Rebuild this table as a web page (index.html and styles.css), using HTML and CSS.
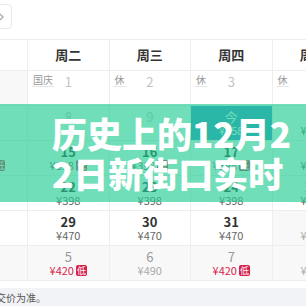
FILE: index.html
```html
<!DOCTYPE html>
<html lang="zh">
<head>
<meta charset="utf-8">
<link rel="stylesheet" href="styles.css">
</head>
<body>
<div class="toolbar">
  <div class="navbtn"><svg width="5" height="8" viewBox="0 0 5 8"><path d="M1 1 L4 4 L1 7" fill="none" stroke="#aaa" stroke-width="1.3"/></svg></div>
</div>
<div class="cal">
  <div class="week">
    <div class="wd">周一</div><div class="wd">周二</div><div class="wd">周三</div><div class="wd">周四</div><div class="wd">周五</div><div class="wd">周六</div><div class="wd">周日</div>
  </div>
  <div class="days">
    <div class="d other"><span class="num past">30</span></div>
    <div class="d"><span class="tag">国庆</span><span class="num past">1</span></div>
    <div class="d"><span class="tag rest">休</span><span class="num past">2</span></div>
    <div class="d"><span class="tag rest">休</span><span class="num past">3</span></div>
    <div class="d"><span class="tag rest">休</span><span class="num past">4</span></div>
    <div class="d"><span class="tag rest">休</span><span class="num past">5</span></div>
    <div class="d"><span class="tag rest">休</span><span class="num past">6</span></div>

    <div class="d"><span class="tag rest">休</span><span class="num past">7</span></div>
    <div class="d"><span class="num past">8</span></div>
    <div class="d"><span class="num past">9</span></div>
    <div class="d today"><span class="num">今</span><span class="price">¥558</span></div>
    <div class="d"><span class="num">11</span><span class="price">¥558</span></div>
    <div class="d"><span class="num">12</span><span class="price">¥558</span></div>
    <div class="d"><span class="num">13</span><span class="price">¥558</span></div>

    <div class="d"><span class="num">14</span><span class="price">¥398 <i class="low">低</i></span></div>
    <div class="d"><span class="num">15</span><span class="price">¥398 <i class="low">低</i></span></div>
    <div class="d"><span class="num">16</span><span class="price">¥398 <i class="low">低</i></span></div>
    <div class="d"><span class="num">17</span><span class="price">¥398 <i class="low">低</i></span></div>
    <div class="d"><span class="num">18</span><span class="price">¥398</span></div>
    <div class="d"><span class="num">19</span><span class="price">¥398</span></div>
    <div class="d"><span class="num">20</span><span class="price">¥398</span></div>

    <div class="d"><span class="num">21</span><span class="price">¥398</span></div>
    <div class="d"><span class="num">22</span><span class="price">¥398</span></div>
    <div class="d"><span class="num">23</span><span class="price">¥398</span></div>
    <div class="d"><span class="num">24</span><span class="price">¥398</span></div>
    <div class="d"><span class="num">25</span><span class="price">¥398</span></div>
    <div class="d"><span class="num">26</span><span class="price">¥398</span></div>
    <div class="d"><span class="num">27</span><span class="price">¥398</span></div>

    <div class="d"><span class="num">28</span><span class="price">¥470</span></div>
    <div class="d"><span class="num">29</span><span class="price">¥470</span></div>
    <div class="d"><span class="num">30</span><span class="price">¥470</span></div>
    <div class="d"><span class="num">31</span><span class="price">¥470</span></div>
    <div class="d other"><span class="num">1</span><span class="price">¥490</span></div>
    <div class="d other"><span class="num">2</span><span class="price">¥490</span></div>
    <div class="d other"><span class="num">3</span><span class="price">¥490</span></div>

    <div class="d other"><span class="num">4</span><span class="price">¥490</span></div>
    <div class="d other"><span class="num">5</span><span class="price red">¥420 <i class="low">低</i></span></div>
    <div class="d other"><span class="num">6</span><span class="price">¥490</span></div>
    <div class="d other"><span class="num">7</span><span class="price red">¥420 <i class="low">低</i></span></div>
    <div class="d other"><span class="num">8</span><span class="price">¥490</span></div>
    <div class="d other"><span class="num">9</span><span class="price">¥490</span></div>
    <div class="d other"><span class="num">10</span><span class="price">¥490</span></div>
  </div>
</div>
<div class="note">请以实际成交价为准。</div>
<div class="banner">
  <h1 class="title"><span class="line">历史上的12月2</span><span class="line">2日新街口实时</span></h1>
</div>
</body>
</html>
```

FILE: styles.css
```css
* { box-sizing: border-box; margin: 0; padding: 0; }
html, body { width: 306px; height: 306px; overflow: hidden; background: #fff; }
body {
  position: relative;
  font-family: "Noto Sans CJK SC", "Noto Sans", sans-serif;
  color: #333;
}
.toolbar { height: 39px; padding-top: 4px; }
.navbtn {
  width: 44px; height: 25px; margin-left: -32px;
  border: 1px solid #e8e8e8; border-radius: 4px;
  display: flex; align-items: center; justify-content: flex-end;
  padding-right: 7px;
}
.navbtn svg { display: block; }
.cal { margin-left: -53.5px; width: 570.5px; }
.week, .days {
  display: grid;
  grid-template-columns: repeat(7, 81.5px);
}
.week { border-top: 1px solid #eee; }
.wd {
  height: 31px; line-height: 30px; text-align: center;
  font-size: 13px; font-weight: 700; color: #333;
  border-right: 1px solid #eee; border-bottom: 1px solid #eee;
}
.days { grid-auto-rows: 35px; }
.d {
  position: relative;
  display: flex; flex-direction: column; align-items: center;
  padding-top: 3px;
  border-right: 1px solid #eee; border-bottom: 1px solid #eee;
}
.d.other { background: #f8f8f8; }
.num { font-size: 13px; line-height: 16px; font-weight: 700; color: #333; }
.num.past { font-weight: 400; color: #c4c4c4; }
.other .num { font-weight: 400; color: #999; }
.price {
  font-size: 11px; line-height: 11px; color: #666; white-space: nowrap;
  display: flex; align-items: center; gap: 2px;
}
.other .price { color: #aaa; }
.other .price.red, .price.red { color: #d6224b; }
.low {
  font-style: normal; font-size: 9px; line-height: 11px;
  width: 11px; height: 11px; text-align: center;
  background: #d6224b; color: #fff; border-radius: 2px;
}
.tag {
  position: absolute; top: 3px; left: 4px;
  font-size: 10px; line-height: 12px; color: #999;
  padding: 0 1px; border-bottom: 1px solid #e5e5e5;
}
.today { background: #3790d1; }
.today .num, .today .price { color: #fff; font-weight: 400; }
.note {
  margin-top: 7px; height: 19px; line-height: 19px;
  background: #f2f3f6; font-size: 10px; color: #555;
  white-space: nowrap; text-indent: -54px; overflow: hidden;
}
.banner {
  position: absolute; left: 0; top: 104px; width: 306px; height: 98px;
  background: rgba(35, 204, 146, 0.65);
  padding: 9px 0 0 52px;
}
.title {
  color: #fff; font-size: 35px; line-height: 40px; font-weight: 900;
  white-space: nowrap;
}
.line { display: block; }
```
